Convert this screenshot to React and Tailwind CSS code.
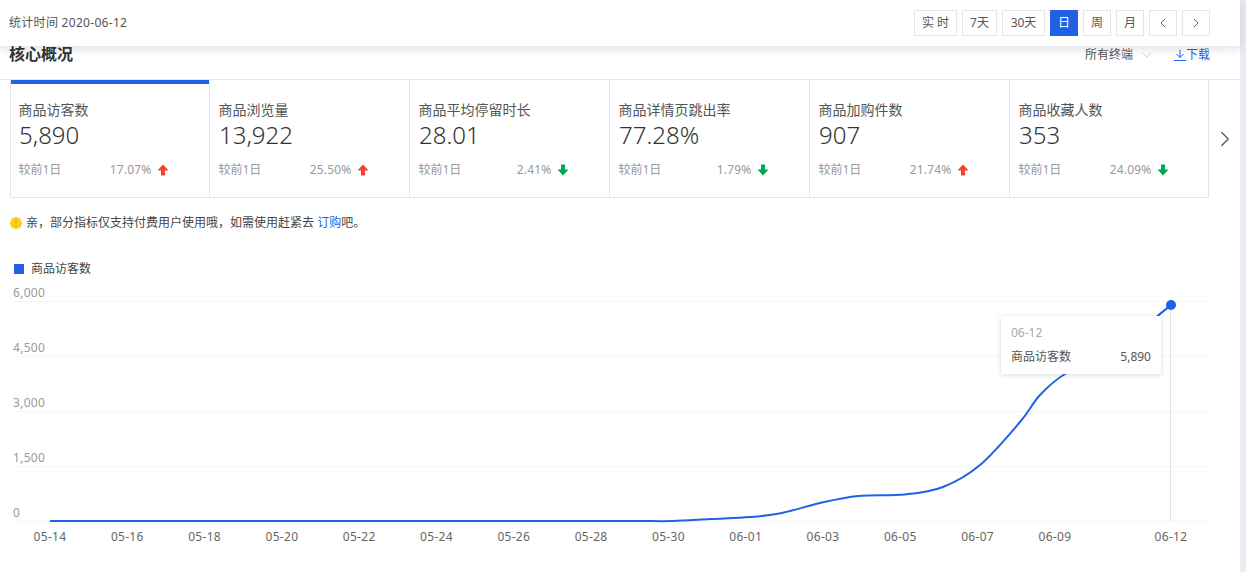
import { ChevronLeft, ChevronRight, ChevronDown } from "lucide-react";

const cards = [
  { name: "商品访客数", value: "5,890", pct: "17.07%", up: true },
  { name: "商品浏览量", value: "13,922", pct: "25.50%", up: true },
  { name: "商品平均停留时长", value: "28.01", pct: "2.41%", up: false },
  { name: "商品详情页跳出率", value: "77.28%", pct: "1.79%", up: false },
  { name: "商品加购件数", value: "907", pct: "21.74%", up: true },
  { name: "商品收藏人数", value: "353", pct: "24.09%", up: false },
];

const yTicks = [
  { label: "6,000", y: 301 },
  { label: "4,500", y: 356 },
  { label: "3,000", y: 411 },
  { label: "1,500", y: 466 },
  { label: "0", y: 521 },
];

const xTicks = [
  "05-14", "05-16", "05-18", "05-20", "05-22", "05-24", "05-26", "05-28",
  "05-30", "06-01", "06-03", "06-05", "06-07", "06-09",
];

// pixel points read off the curve
const points = [
  [50, 521], [600, 521], [640, 521], [673, 521], [711, 519], [750, 517], [782, 513], [820, 503],
  [858, 496], [905, 494.5], [943, 487], [980, 465], [1020, 422], [1040, 395],
  [1065, 374], [1098, 360], [1140, 331], [1157, 316.5], [1171, 305],
];

function curve(pts) {
  let d = `M${pts[0][0]} ${pts[0][1]}`;
  for (let i = 0; i < pts.length - 1; i++) {
    const p0 = pts[i - 1] || pts[i];
    const p1 = pts[i];
    const p2 = pts[i + 1];
    const p3 = pts[i + 2] || p2;
    const k = 1 / 6;
    // first stretch is a flat run, keep the handles inside it
    const t1 = i <= 1 ? 0 : k;
    const t2 = i === 0 ? 0 : k;
    d += ` C${p1[0] + (p2[0] - p0[0]) * t1} ${p1[1] + (p2[1] - p0[1]) * t1} ${p2[0] - (p3[0] - p1[0]) * t2} ${p2[1] - (p3[1] - p1[1]) * t2} ${p2[0]} ${p2[1]}`;
  }
  return d;
}

function Arrow({ up }) {
  return (
    <svg width="12" height="12" viewBox="0 0 12 12" className="ml-[5px]">
      {up ? (
        <path d="M6 0.5 L11.5 6.5 H8 V11.5 H4 V6.5 H0.5 Z" fill="#f5412f" />
      ) : (
        <path d="M6 11.5 L11.5 5.5 H8 V0.5 H4 V5.5 H0.5 Z" fill="#00a854" />
      )}
    </svg>
  );
}

function TopButton({ active, className, children }) {
  return (
    <div
      className={`h-[26px] flex items-center justify-center border text-[12px] ${
        active
          ? "bg-[#1f62e8] border-[#1f62e8] text-white"
          : "bg-white border-[#e5e5e5] text-[#555]"
      } ${className}`}
    >
      {children}
    </div>
  );
}

export default function App() {
  return (
    <div
      className="flex h-[572px] w-full overflow-hidden bg-white text-[#333]"
      style={{ fontFamily: '"Noto Sans", "Noto Sans CJK SC", sans-serif' }}
    >
      <div className="w-[1240px] shrink-0 flex flex-col">
        {/* top bar */}
        <div className="relative z-10 h-[46px] shrink-0 bg-white shadow-[0_2px_10px_rgba(0,0,0,0.14)] flex items-center justify-between pl-[9px] pr-[30px]">
          <span className="text-[12px] leading-[16px] text-[#555] tracking-[0.3px]">统计时间 2020-06-12</span>
          <div className="flex gap-[5px]">
            <TopButton className="w-[43px]">实 时</TopButton>
            <TopButton className="w-[35px]">7天</TopButton>
            <TopButton className="w-[43px]">30天</TopButton>
            <TopButton active className="w-[28px]">日</TopButton>
            <TopButton className="w-[28px]">周</TopButton>
            <TopButton className="w-[28px]">月</TopButton>
            <TopButton className="w-[28px]">
              <ChevronLeft size={16} strokeWidth={1.4} />
            </TopButton>
            <TopButton className="w-[28px]">
              <ChevronRight size={16} strokeWidth={1.4} />
            </TopButton>
          </div>
        </div>

        {/* title row */}
        <div className="h-[34px] shrink-0 border-b border-[#e4e8ee] flex justify-between pl-[9px] pr-[30px]">
          <h2 className="text-[16px] leading-[16px] font-bold text-[#333]">核心概况</h2>
          <div className="flex items-start text-[12px] leading-[18px]">
            <span className="text-[#555]">所有终端</span>
            <ChevronDown size={16} strokeWidth={1.3} className="ml-[6px] mt-[1px] text-[#ccc]" />
            <svg width="12" height="12" viewBox="0 0 12 12" className="ml-[19px] mt-[3px]" fill="none" stroke="#1f62e8">
              <path d="M6 0.5 V8.5 M2.5 5 L6 8.5 L9.5 5 M0 11.5 H12" />
            </svg>
            <span className="text-[#1f62e8]">下载</span>
          </div>
        </div>

        {/* metric cards */}
        <div className="flex shrink-0 pl-[10px]">
          {cards.map((c, i) => (
            <div
              key={c.name}
              className={`relative h-[118px] border-b border-r border-[#dfe6ee] pt-[21px] ${
                i === 0 ? "w-[200px] border-l pl-[8px]" : i === 5 ? "w-[199px] pl-[9px]" : "w-[200px] pl-[9px]"
              }`}
            >
              {i === 0 && <div className="absolute left-0 right-0 top-0 h-[4px] bg-[#1f62e8]" />}
              <div className="text-[14px] leading-[18px] text-[#555] -ml-[0.5px]">{c.name}</div>
              <div className="text-[24px] leading-[32px] font-light text-[#333]">{c.value}</div>
              <div className="mt-[10px] w-[150px] -ml-[0.5px] flex justify-between items-center text-[12px] leading-[18px] text-[#999]">
                <span>较前1日</span>
                <span className="flex items-center">
                  <span className="tracking-[0.2px]">{c.pct}</span>
                  <Arrow up={c.up} />
                </span>
              </div>
            </div>
          ))}
          <div className="flex-1 flex items-center justify-center">
            <ChevronRight size={26} strokeWidth={1.1} className="text-[#555]" />
          </div>
        </div>

        {/* notice */}
        <div className="mt-[16px] pl-[10px] flex items-center h-[18px] text-[12px] text-[#444]">
          <span className="w-[12px] h-[12px] rounded-full bg-[#fad21e] flex items-center justify-center text-[9px] leading-none text-[#c9a010]">!</span>
          <span className="ml-[4px]">
            亲，部分指标仅支持付费用户使用哦，如需使用赶紧去 <span className="text-[#1f62e8]">订购</span>吧。
          </span>
        </div>

        {/* legend */}
        <div className="mt-[28px] pl-[14px] flex items-center h-[18px] text-[12px] text-[#444]">
          <span className="w-[10px] h-[10px] bg-[#1f62e8]" />
          <span className="ml-[7px]">商品访客数</span>
        </div>

        {/* chart */}
        <div className="relative h-[294px] shrink-0">
          <svg width="1240" height="294" viewBox="0 278 1240 294" className="block" fontSize="12" letterSpacing="0.3">
            {yTicks.map((t) => (
              <g key={t.label}>
                <line x1="11" x2="1210" y1={t.y + 0.5} y2={t.y + 0.5} stroke="#f5f6fc" />
                <text x="13" y={t.y - 4} fill="#999">{t.label}</text>
              </g>
            ))}
            {xTicks.map((t, i) => (
              <text key={t} x={50 + i * 77.3} y="541" fill="#666" textAnchor="middle">{t}</text>
            ))}
            <text x="1171" y="541" fill="#666" textAnchor="middle">06-12</text>
            <line x1="1170.5" x2="1170.5" y1="305" y2="521" stroke="#e3e3e3" />
            <path d={curve(points)} fill="none" stroke="#1f62e8" strokeWidth="2" />
            <circle cx="1171" cy="305" r="5" fill="#1f62e8" />
          </svg>

          <div className="absolute left-[1001px] top-[38px] w-[160px] h-[58px] bg-white shadow-[0_1px_5px_rgba(0,0,0,0.16)] px-[10px] pt-[8px] text-[12px] leading-[18px]">
            <div className="text-[#aaa]">06-12</div>
            <div className="mt-[6px] flex justify-between text-[#555]">
              <span>商品访客数</span>
              <span>5,890</span>
            </div>
          </div>
        </div>
      </div>
      <div className="flex-1 bg-[#e9ecf2]" />
    </div>
  );
}
